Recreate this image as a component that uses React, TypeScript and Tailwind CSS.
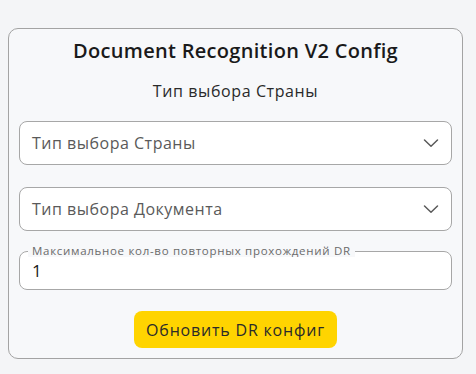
const font = { fontFamily: '"Open Sans", "Noto Sans", sans-serif' };

const Chevron = () => (
  <svg width="16" height="10" viewBox="0 0 16 10" fill="none" className="text-[#5a5a5a]">
    <path d="M1.5 2 L8 8.2 L14.5 2" stroke="currentColor" strokeWidth="1.5" strokeLinecap="round" strokeLinejoin="round" />
  </svg>
);

const SelectBox = ({ placeholder }: { placeholder: string }) => (
  <div className="flex h-[44px] items-center justify-between rounded-[8px] border border-[#a7a7a7] bg-white pl-[12px] pr-[12px]">
    <span className="text-[16px] tracking-[0.5px] text-[#5a5a5a]">{placeholder}</span>
    <Chevron />
  </div>
);

export default function App() {
  return (
    <div className="min-h-[374px] w-[476px] bg-[#f4f5f7] pt-[28px] pl-[8px]" style={font}>
      <div className="w-[455px] rounded-[10px] border border-[#a3a3a3] bg-[#f7f8fa] px-[10px] pt-[9px] pb-[10px]">
        <h1 className="text-center text-[20px] font-semibold leading-[26px] tracking-[0.3px] text-[#1a1a1a]">
          Document Recognition V2 Config
        </h1>
        <p className="mt-[16px] text-center text-[16px] leading-[22px] tracking-[0.6px] text-[#2a2a2a]">
          Тип выбора Страны
        </p>
        <div className="mt-[19px] flex flex-col gap-[22px]">
          <SelectBox placeholder="Тип выбора Страны" />
          <SelectBox placeholder="Тип выбора Документа" />
        </div>
        <fieldset className="mt-[14px] rounded-[8px] border border-[#a7a7a7] bg-white px-[8px] pb-[8px]">
          <legend className="bg-[#f7f8fa] px-[4px] text-[11.5px] leading-[12px] tracking-[0.7px] text-[#6b6b6b]">
            Максимальное кол-во повторных прохождений DR
          </legend>
          <div className="pl-[4px] pt-[4px] text-[17px] leading-[20px] text-[#1a1a1a]">1</div>
        </fieldset>
        <div className="mt-[21px] flex justify-center">
          <button className="h-[37px] rounded-[8px] bg-[#ffd400] px-[12px] text-[16px] tracking-[0.8px] text-[#2a2a2a]">
            Обновить DR конфиг
          </button>
        </div>
      </div>
    </div>
  );
}
